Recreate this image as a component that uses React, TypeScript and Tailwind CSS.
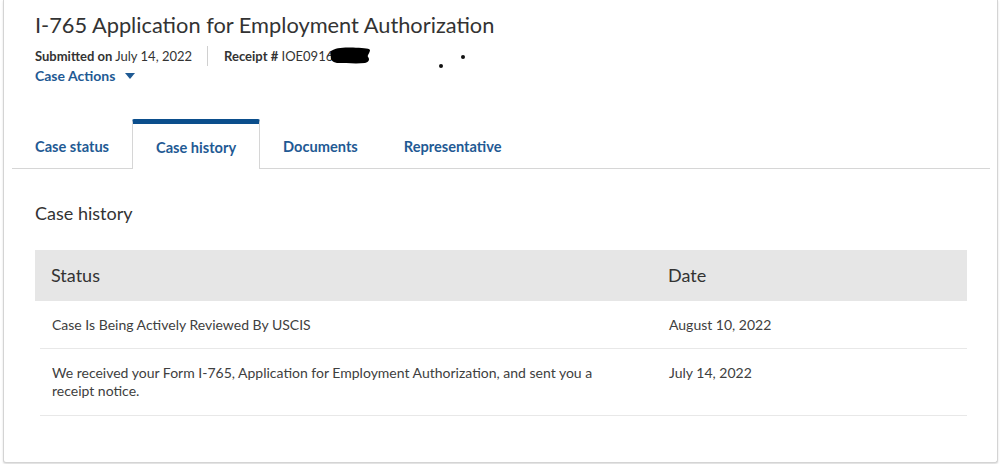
import React from "react";

const font = { fontFamily: "Lato, 'Open Sans', sans-serif" };

export default function App() {
  return (
    <div className="w-[1000px] h-[464px] bg-white overflow-hidden" style={font}>
      <div className="ml-[3px] mr-[2px] h-[463px] bg-white border-l border-r border-b border-[#d4d4d4] rounded-b-[3px] shadow-[0_1px_2px_rgba(0,0,0,0.15)] flex flex-col">
        {/* Header */}
        <div className="pl-[31px] pt-[11px] relative">
          <h1 className="text-[21.8px] leading-[28px] text-[#333]">I-765 Application for Employment Authorization</h1>
          <div className="flex items-center mt-[7px] h-[20px] text-[13px] text-[#333] leading-[20px]">
            <span>
              <span className="font-bold">Submitted on</span> July 14, 2022
            </span>
            <span className="ml-[15px] mr-[16px] w-px h-[20px] bg-[#d0d0d0]" />
            <span className="flex items-center">
              <span className="font-bold">Receipt #</span>&nbsp;IOE0916
              <svg width="44" height="18" viewBox="0 0 44 18" className="-ml-[4px]">
                <path d="M2 4 C6 1 14 0 24 0.5 C32 1 40 1 41 3 C41 6 38 8 39 10 C41 12 40 15 36 16 C28 17 16 16 8 16 C3 15 1 12 2 9 C1 7 1 6 2 4 Z" fill="#000" />
              </svg>
            </span>
            <svg width="40" height="20" viewBox="0 0 40 20" className="ml-[64px] overflow-visible">
              <circle cx="4" cy="20" r="2" fill="#111" />
              <circle cx="26" cy="11" r="2" fill="#111" />
            </svg>
          </div>
          <button className="flex items-center gap-[10px] text-[14px] font-bold text-[#1f5a94] leading-[20px]">
            Case Actions
            <svg width="10" height="6" viewBox="0 0 10 6">
              <path d="M0 0 L10 0 L5 6 Z" fill="#1f5a94" />
            </svg>
          </button>
        </div>

        {/* Tabs */}
        <div className="mt-[33px] ml-[8px] mr-[7px] flex border-b border-[#d6d6d6] h-[50px]">
          <div className="px-[23px] flex items-center text-[14.6px] font-bold text-[#1f5a94] pt-[7px]">Case status</div>
          <div className="px-[23px] flex items-center text-[14.6px] font-bold text-[#1f5a94] border-t-[5px] border-t-[#0b4e8c] border-l border-r border-[#d6d6d6] rounded-t-[2px] bg-white -mb-px pt-[2px]">
            Case history
          </div>
          <div className="px-[23px] flex items-center text-[14.6px] font-bold text-[#1f5a94] pt-[7px]">Documents</div>
          <div className="px-[23px] flex items-center text-[14.6px] font-bold text-[#1f5a94] pt-[7px]">Representative</div>
        </div>

        {/* Content */}
        <div className="pl-[31px] pr-[30px] pt-[32px]">
          <h2 className="text-[18px] leading-[24px] text-[#333]">Case history</h2>
          <div className="mt-[25px]">
            <div className="grid grid-cols-[617px_1fr] bg-[#e6e6e6] h-[51px] items-center pl-[16px] text-[18px] text-[#333]">
              <div>Status</div>
              <div>Date</div>
            </div>
            <div className="ml-[5px] text-[14px] text-[#404040] leading-[18px]">
              <div className="grid grid-cols-[617px_1fr] pl-[12px] border-b border-[#e8e8e8] h-[48px] items-center pt-[1px]">
                <div>Case Is Being Actively Reviewed By USCIS</div>
                <div>August 10, 2022</div>
              </div>
              <div className="grid grid-cols-[617px_1fr] pl-[12px] border-b border-[#e8e8e8] h-[67px] pt-[15px]">
                <div className="max-w-[565px]">
                  We received your Form I-765, Application for Employment Authorization, and sent you a receipt notice.
                </div>
                <div>July 14, 2022</div>
              </div>
            </div>
          </div>
        </div>
      </div>
    </div>
  );
}
